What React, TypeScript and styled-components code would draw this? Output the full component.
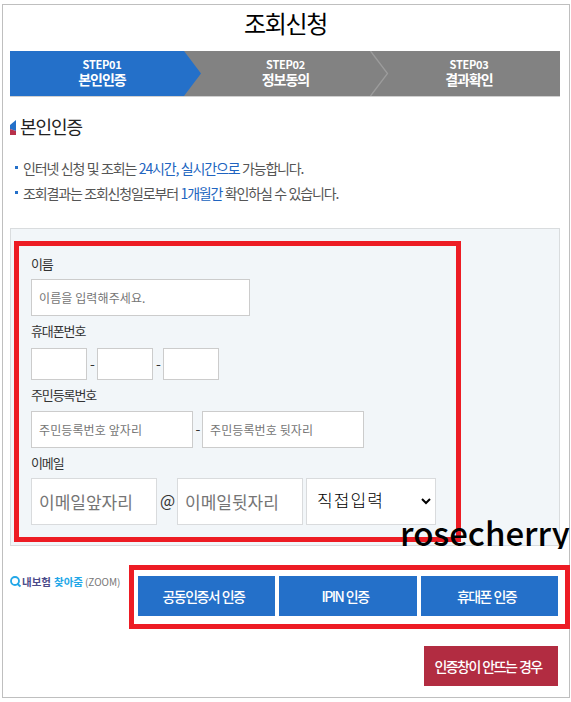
import React from "react";
import styled, { createGlobalStyle } from "styled-components";

const GlobalStyle = createGlobalStyle`
  * { box-sizing: border-box; }
  body {
    margin: 0;
    background: #fff;
    color: #333;
    font-family: "Noto Sans CJK KR", "Noto Sans", sans-serif;
  }
  input, select, button { font-family: inherit; margin: 0; }
`;

const Page = styled.main`
  position: relative;
  width: 571px;
  height: 702px;
  padding: 4px 0 0 2px;
  overflow: hidden;
`;

const Frame = styled.div`
  width: 568px;
  height: 694px;
  padding: 0 9px 0 7px;
  border: 1px solid #bfbfbf;
`;

const Title = styled.h1`
  height: 46px;
  margin: 0;
  padding-left: 1px;
  color: #000;
  font-size: 24px;
  font-weight: 400;
  line-height: 36px;
  letter-spacing: -1.3px;
  text-align: center;
`;

const Steps = styled.ol`
  position: relative;
  display: grid;
  grid-template-columns: 183px 184px 183px;
  width: 550px;
  height: 46px;
  margin: 0;
  padding: 0;
  list-style: none;
  background: #828282;
  border-bottom: 1px solid #d0d0d0;
`;

const StepShape = styled.svg`
  position: absolute;
  left: 0;
  top: 0;
`;

const Step = styled.li`
  position: relative;
  padding: 6px 0 0 1px;
  color: #fff;
  font-weight: 700;
  text-align: center;
`;

const StepNumber = styled.span`
  display: block;
  font-size: 11px;
  line-height: 15px;
  letter-spacing: -0.3px;
`;

const StepName = styled.span`
  display: block;
  font-size: 14px;
  line-height: 14px;
  letter-spacing: -1px;
`;

const Heading = styled.h2`
  display: flex;
  align-items: center;
  gap: 4px;
  height: 24px;
  margin: 18px 0 0;
  color: #222;
  font-size: 18px;
  font-weight: 400;
  line-height: 24px;
  letter-spacing: -1.1px;
`;

const HeadingText = styled.span`
  margin-top: -2px;
`;

const Notes = styled.ul`
  height: 52px;
  margin: 17px 0 0;
  padding: 0;
  list-style: none;
`;

const Note = styled.li`
  display: flex;
  align-items: center;
  height: 25px;
  padding-left: 5px;
  color: #555;
  font-size: 14px;
  line-height: 25px;
  letter-spacing: -1.16px;
  word-spacing: 0.6px;
  white-space: pre;

  &::before {
    content: "";
    width: 3px;
    height: 3px;
    margin: 0 5px 2px 0;
    background: #2470c9;
  }
`;

const Accent = styled.em`
  color: #2064c0;
  font-style: normal;
`;

const Panel = styled.form`
  width: 550px;
  height: 318px;
  margin-top: 20px;
  padding: 24px 0 0 20px;
  background: #f2f6f9;
  border: 1px solid #d9dcde;
`;

const Label = styled.label<{ $height: number }>`
  display: block;
  height: ${(p) => p.$height}px;
  font-size: 13px;
  line-height: 21px;
  letter-spacing: -1.1px;
`;

const FieldRow = styled.div<{ $height: number; $gap?: number }>`
  display: flex;
  height: ${(p) => p.$height}px;
  margin-bottom: ${(p) => p.$gap ?? 4}px;
`;

const Input = styled.input<{ $width: number; $large?: boolean }>`
  width: ${(p) => p.$width}px;
  height: 100%;
  padding: 0 7px;
  background: #fff;
  border: 1px solid ${(p) => (p.$large ? "#d9dbdd" : "#ccc")};
  border-radius: 0;
  font-size: ${(p) => (p.$large ? 17 : 12)}px;
  letter-spacing: ${(p) => (p.$large ? 0 : 0.1)}px;

  &::placeholder { color: #757575; opacity: 1; }
`;

const Separator = styled.span<{ $width: number; $size?: number }>`
  display: flex;
  align-items: center;
  justify-content: center;
  width: ${(p) => p.$width}px;
  padding: 0 0 3px 1px;
  font-size: ${(p) => p.$size ?? 14}px;
  line-height: 20px;
`;

const SelectBox = styled.div`
  position: relative;
  width: 130px;
  margin-left: 3px;
`;

const Select = styled.select`
  appearance: none;
  width: 100%;
  height: 100%;
  padding: 0 0 4px 10px;
  background: #fff;
  border: 1px solid #d9dbdd;
  border-radius: 0;
  color: #000;
  font-size: 17px;
  font-weight: 300;
  letter-spacing: 1.1px;
`;

const SelectArrow = styled.svg`
  position: absolute;
  right: 5px;
  top: 20px;
  pointer-events: none;
`;

const Footer = styled.div`
  display: flex;
  justify-content: space-between;
  width: 548px;
  margin-top: 30px;
`;

const Brand = styled.div`
  display: flex;
  align-items: center;
  height: 12px;
  color: #4c4c8a;
  font-size: 10.5px;
  font-weight: 700;
  line-height: 12px;
  white-space: pre;
`;

const BrandAccent = styled.span`
  margin-left: 3px;
  color: #22a7e8;
`;

const BrandSuffix = styled.span`
  margin-left: 2px;
  color: #777;
  font-size: 10px;
  font-weight: 400;
`;

const Actions = styled.div`
  display: grid;
  grid-template-columns: 137px 138px 137px;
  gap: 4px;
`;

const Button = styled.button<{ $warning?: boolean }>`
  display: block;
  width: ${(p) => (p.$warning ? "134px" : "100%")};
  height: 40px;
  margin: ${(p) => (p.$warning ? "30px 0 0 414px" : "0")};
  padding: 0 6px 0 0;
  background: ${(p) => (p.$warning ? "#b22c41" : "#2470c9")};
  border: 0;
  color: #fff;
  font-size: 14px;
  font-weight: 500;
  line-height: 40px;
  letter-spacing: -1.55px;
  word-spacing: 1px;
`;

const Highlight = styled.div<{ $x: number; $y: number; $w: number; $h: number }>`
  position: absolute;
  left: ${(p) => p.$x}px;
  top: ${(p) => p.$y}px;
  width: ${(p) => p.$w}px;
  height: ${(p) => p.$h}px;
  border: 5px solid #ed1c24;
  pointer-events: none;
`;

const Watermark = styled.span`
  position: absolute;
  left: 400px;
  top: 509px;
  height: 40px;
  overflow: hidden;
  color: #000;
  font-family: "Noto Sans CJK KR", sans-serif;
  font-size: 33px;
  font-weight: 500;
  line-height: 46px;
`;

export default function App() {
  return (
    <Page>
      <GlobalStyle />
      <Frame>
        <Title>조회신청</Title>
        <Steps>
          <StepShape width="550" height="45" viewBox="0 0 550 45">
            <path d="M0 0H174L191 22.5L174 45H0Z" fill="#2470c9" />
            <path d="M360.500 0L377.500 22.500L360.500 45" fill="none" stroke="#9c9c9c" strokeWidth="1.300" />
          </StepShape>
          <Step><StepNumber>STEP01</StepNumber><StepName>본인인증</StepName></Step>
          <Step><StepNumber>STEP02</StepNumber><StepName>정보동의</StepName></Step>
          <Step><StepNumber>STEP03</StepNumber><StepName>결과확인</StepName></Step>
        </Steps>
        <Heading>
          <svg width="6" height="15" viewBox="0 0 6 15">
            <path d="M0 5L6 0V11L0 9Z" fill="#2470c9" />
            <path d="M0 9L6 11V15H0Z" fill="#b8304a" />
          </svg>
          <HeadingText>본인인증</HeadingText>
        </Heading>
        <Notes>
          <Note>인터넷 신청 및 조회는 <Accent>24시간, 실시간으로</Accent> 가능합니다.</Note>
          <Note>조회결과는 조회신청일로부터 <Accent>1개월간</Accent> 확인하실 수 있습니다.</Note>
        </Notes>
        <Panel>
          <Label $height={26}>이름</Label>
          <FieldRow $height={37}>
            <Input $width={219} placeholder="이름을 입력해주세요." />
          </FieldRow>
          <Label $height={28}>휴대폰번호</Label>
          <FieldRow $height={32}>
            <Input $width={56} />
            <Separator $width={10}>-</Separator>
            <Input $width={56} />
            <Separator $width={10}>-</Separator>
            <Input $width={56} />
          </FieldRow>
          <Label $height={27}>주민등록번호</Label>
          <FieldRow $height={37}>
            <Input $width={162} placeholder="주민등록번호 앞자리" />
            <Separator $width={9}>-</Separator>
            <Input $width={162} placeholder="주민등록번호 뒷자리" />
          </FieldRow>
          <Label $height={26}>이메일</Label>
          <FieldRow $height={47} $gap={0}>
            <Input $large $width={126} placeholder="이메일앞자리" />
            <Separator $width={20} $size={16}>@</Separator>
            <Input $large $width={126} placeholder="이메일뒷자리" />
            <SelectBox>
              <Select><option>직접입력</option></Select>
              <SelectArrow width="10" height="7" viewBox="0 0 10 7">
                <path d="M1 1L5 5L9 1" fill="none" stroke="#000" strokeWidth="2" />
              </SelectArrow>
            </SelectBox>
          </FieldRow>
        </Panel>
        <Footer>
          <Brand>
            <svg width="12" height="12" viewBox="0 0 12 12">
              <circle cx="5" cy="5" r="4" fill="none" stroke="#22a7e8" strokeWidth="1.800" />
              <path d="M7 7.500L10.500 10.500" stroke="#22a7e8" strokeWidth="2" />
            </svg>
            내보험<BrandAccent>찾아줌</BrandAccent><BrandSuffix>(ZOOM)</BrandSuffix>
          </Brand>
          <Actions>
            <Button>공동인증서 인증</Button>
            <Button>IPIN 인증</Button>
            <Button>휴대폰 인증</Button>
          </Actions>
        </Footer>
        <Button $warning>인증창이 안뜨는 경우</Button>
      </Frame>
      <Highlight $x={14} $y={241} $w={447} $h={301} />
      <Highlight $x={129} $y={565} $w={441} $h={64} />
      <Watermark>rosecherry</Watermark>
    </Page>
  );
}
